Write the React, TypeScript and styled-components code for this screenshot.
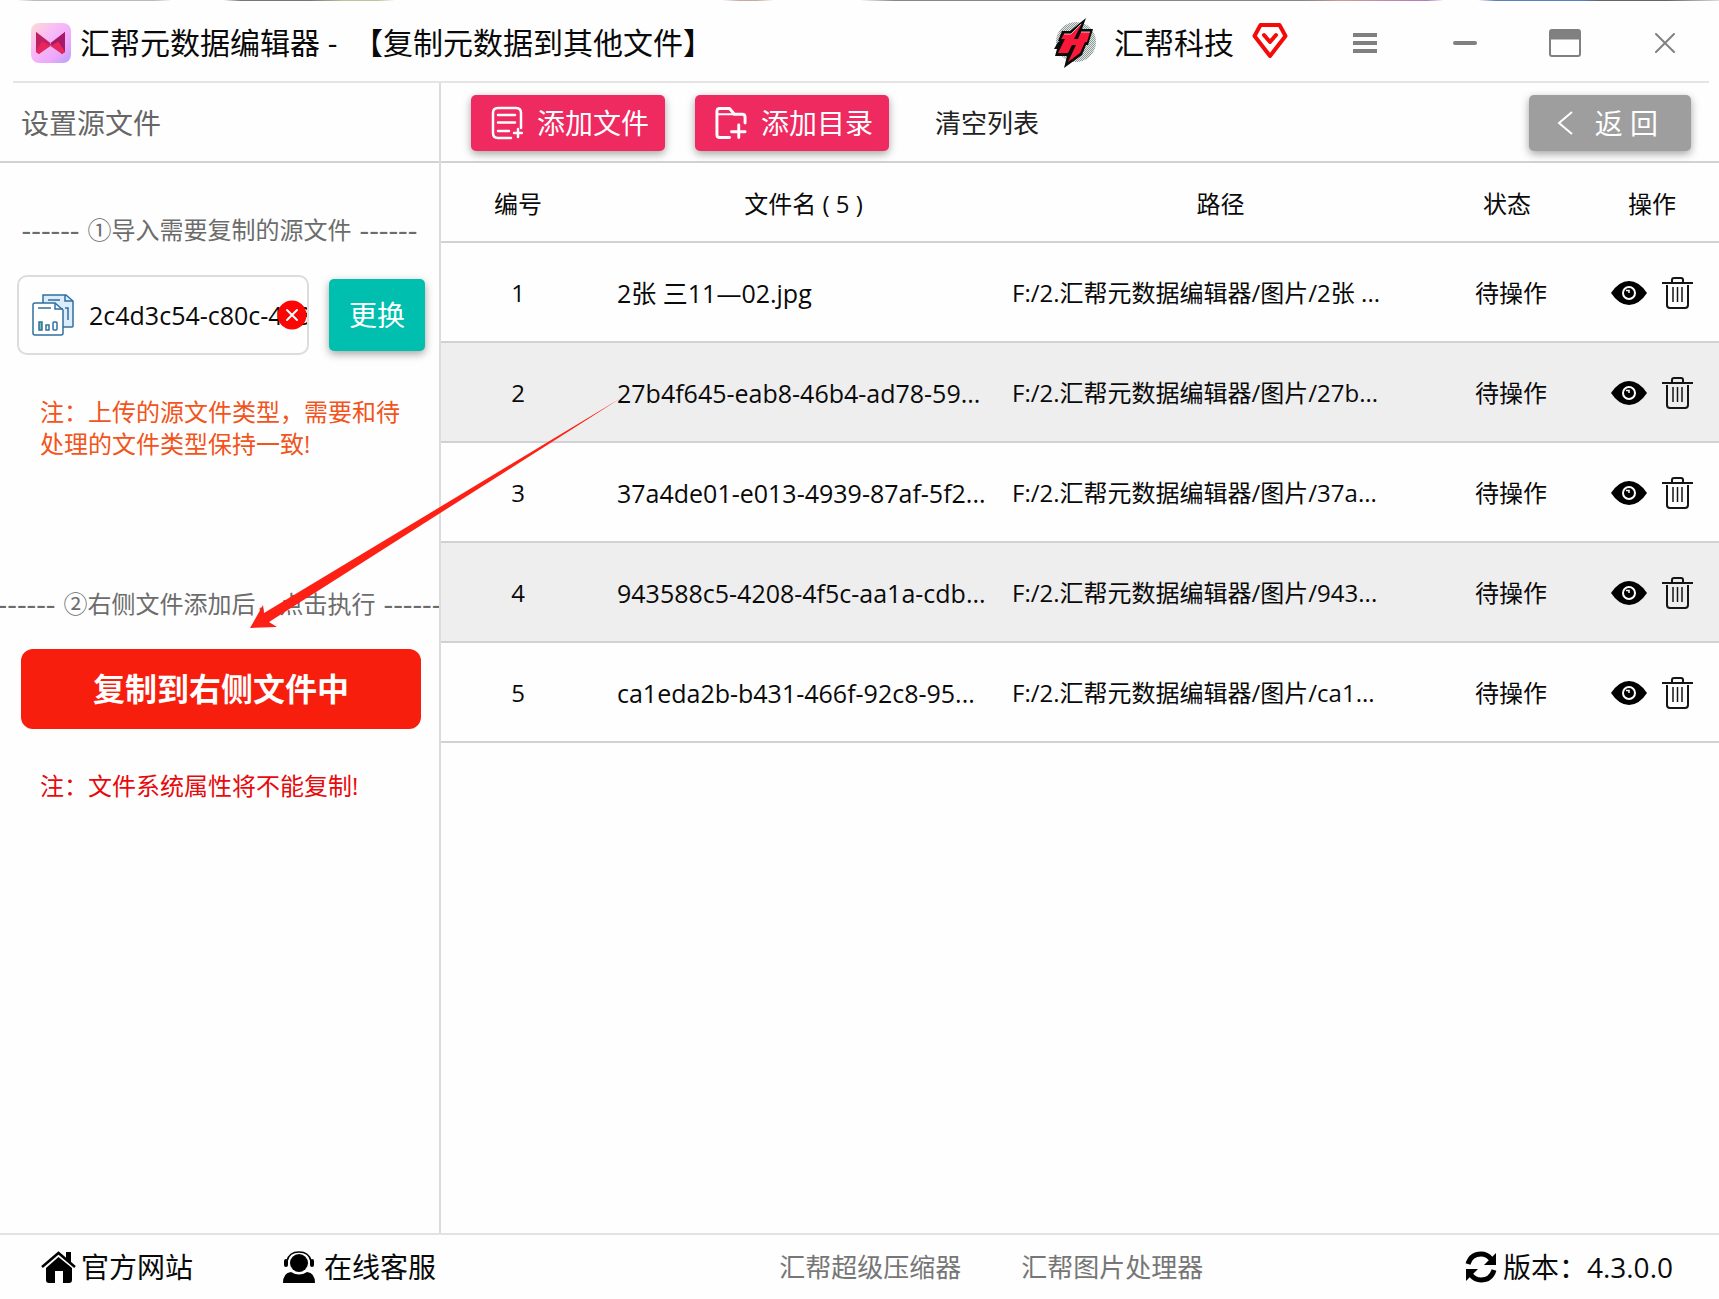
import React, { useState } from 'react';
import styled, { createGlobalStyle } from 'styled-components';

const GlobalStyle = createGlobalStyle`
  * { box-sizing: border-box; }
  body {
    margin: 0;
    background: #fefefe;
    color: #0a0a0a;
    font-family: "Open Sans", "Noto Sans CJK SC", sans-serif;
    font-size: 24px;
    line-height: 32px;
  }
  button { font: inherit; color: inherit; border: 0; padding: 0; background: none; cursor: pointer; }
  a { color: inherit; text-decoration: none; }
  svg { display: block; flex: none; }
`;

const Window = styled.div`
  position: relative;
  display: flex;
  flex-direction: column;
  min-height: 100vh;
  overflow: hidden;
`;

const TopEdge = styled.div`
  height: 1px;
  background: linear-gradient(90deg, #fff 1%, #bbb 2% 9%, #fff 10% 13%, #777 14% 18%, #b9c79c 20% 22%, #fff 23% 42%, #c9a9a0 43% 44%, #fff 45% 50%, #888 52% 76%, #d09a94 78%, #b07cc0 83%, #fff 84% 86%, #5d7fc0 87% 92%, #666 93% 97%, #ddd);
`;

const TitleBar = styled.header`
  display: flex;
  align-items: center;
  height: 82px;
  margin: 0 10px 0 13px;
  padding: 4px 0 0 18px;
  border-bottom: 2px solid #e4e4e4;
  font-size: 30px;
  line-height: 40px;
`;

const AppTitle = styled.h1`
  flex: 1;
  display: flex;
  align-items: center;
  gap: 9px;
  margin: 0;
  font-size: inherit;
  font-weight: 400;
  white-space: pre;
`;

const Brand = styled.div`
  display: flex;
  align-items: center;
  gap: 18px;
  padding-right: 27px;
`;

const WindowButtons = styled.div`
  display: flex;
  margin-right: -6px;
`;

const WindowButton = styled.button`
  display: flex;
  justify-content: center;
  align-items: center;
  width: 100px;
  height: 60px;
  color: #808080;
`;

const Body = styled.div`
  flex: 1;
  display: flex;
`;

const Sidebar = styled.aside`
  flex: none;
  width: 441px;
  border-right: 2px solid #dcdcdc;
  overflow: hidden;
`;

const Bar = styled.div`
  display: flex;
  align-items: center;
  height: 80px;
  padding-top: 2px;
  border-bottom: 2px solid #d2d2d2;
`;

const SidebarTitle = styled.h2`
  margin: 0;
  padding-left: 21px;
  font-size: 28px;
  font-weight: 400;
  color: #666;
`;

const StepTitle = styled.h3<{ $top: number }>`
  display: flex;
  justify-content: center;
  align-items: center;
  gap: 8px;
  margin: ${(p) => p.$top}px 0 0;
  font-size: 24px;
  font-weight: 400;
  color: #6c6c6c;
  white-space: nowrap;
`;

const Dashes = styled.span`
  font-size: 30px;
`;

const SourceRow = styled.div`
  display: flex;
  align-items: center;
  gap: 20px;
  padding: 29px 14px 0 17px;
`;

const FileBox = styled.div`
  position: relative;
  flex: 1;
  display: flex;
  align-items: center;
  gap: 15px;
  min-width: 0;
  height: 80px;
  padding-left: 13px;
  border: 2px solid #dcdcdc;
  border-radius: 10px;
  overflow: hidden;
  white-space: nowrap;
`;

const RemoveButton = styled.button`
  position: absolute;
  right: 0;
  top: 23px;
`;

const RaisedButton = styled.button<{ $bg: string; $height?: number }>`
  display: flex;
  align-items: center;
  justify-content: center;
  gap: 14px;
  height: ${(p) => p.$height ?? 56}px;
  padding: 0 16px 0 20px;
  border-radius: 5px;
  background: ${(p) => p.$bg};
  box-shadow: 0 3px 8px rgba(0, 0, 0, 0.36);
  color: #fff;
  font-size: 28px;
  white-space: nowrap;
`;

const Replace = styled(RaisedButton)`
  width: 96px;
  padding: 0;
`;

const Note = styled.p<{ $color: string }>`
  margin: 41px 36px 0 40px;
  color: ${(p) => p.$color};
`;

const ExecuteButton = styled.button`
  display: block;
  width: calc(100% - 39px);
  height: 80px;
  margin: 29px 18px 0 21px;
  border-radius: 12px;
  background: #f71e0d;
  color: #fff;
  font-size: 32px;
  font-weight: 700;
`;

const Content = styled.main`
  flex: 1;
  min-width: 0;
`;

const Toolbar = styled(Bar)`
  gap: 30px;
  padding: 2px 28px 0 30px;
`;

const ClearButton = styled.button`
  margin: 0 auto 0 16px;
  font-size: 26px;
  color: #222;
`;

const BackButton = styled(RaisedButton)`
  gap: 22px;
  padding: 0 33px 0 28px;
`;

const FileTable = styled.table`
  width: 100%;
  table-layout: fixed;
  border-collapse: separate;
  border-spacing: 0;
`;

const Column = styled.col<{ $width?: number }>`
  width: ${(p) => (p.$width ? `${p.$width}px` : 'auto')};
`;

const HeadCell = styled.th`
  height: 80px;
  padding: 4px 0 0;
  border-bottom: 2px solid #d2d2d2;
  font-weight: 400;
`;

const Row = styled.tr`
  &:nth-child(even) { background: #eee; }
`;

const Cell = styled.td<{ $align?: string; $indent?: number }>`
  height: 100px;
  padding: 2px 0 0 ${(p) => p.$indent ?? 0}px;
  border-bottom: 2px solid #d2d2d2;
  text-align: ${(p) => p.$align ?? 'center'};
  white-space: nowrap;
`;

const FileName = styled.span`
  font-size: 25px;
`;

const Actions = styled.div`
  display: flex;
  justify-content: center;
  gap: 15px;
`;

const IconButton = styled.button`
  display: flex;
  align-items: center;
`;

const Footer = styled.footer`
  display: grid;
  grid-template-columns: 11fr auto 7fr;
  align-items: center;
  height: 66px;
  padding: 0 46px 0 41px;
  border-top: 2px solid #e2e2e2;
  font-size: 28px;
  white-space: nowrap;
`;

const FooterGroup = styled.nav<{ $gap: number }>`
  display: flex;
  gap: ${(p) => p.$gap}px;
`;

const Promo = styled(FooterGroup)`
  font-size: 26px;
  color: #767676;
`;

const FooterLink = styled.a<{ $gap: number }>`
  display: flex;
  align-items: center;
  gap: ${(p) => p.$gap}px;
`;

const Version = styled.div`
  display: flex;
  justify-content: flex-end;
  align-items: center;
  gap: 6px;
`;

const Pointer = styled.svg`
  position: absolute;
  left: 250px;
  top: 396px;
  pointer-events: none;
`;

const AppLogo = () => (
  <svg width="40" height="40" viewBox="0 0 40 40" aria-hidden="true">
    <defs>
      <linearGradient id="logoBg" x1="0" y1="0" x2="1" y2="1">
        <stop offset="0" stopColor="#fbdcd0" />
        <stop offset="0.35" stopColor="#f8bdf6" />
        <stop offset="0.7" stopColor="#efa8fb" />
        <stop offset="1" stopColor="#b5a2fa" />
      </linearGradient>
    </defs>
    <rect width="40" height="40" rx="8" fill="url(#logoBg)" />
    <path d="M5 9L19.500 20L8 31L5 29Z" fill="#d4276a" />
    <path d="M34 9L19.500 20L31 31L34 29Z" fill="#ad1a68" />
    <path d="M8 31L19.500 23L31 31L34 29L27 18L19.500 23L12 18L5 29Z" fill="#e8265d" />
    <path d="M5 9L19.500 21L19.500 23L11 18L5 27Z" fill="#c01f60" />
    <path d="M34 9L19.500 21L19.500 23L28 18L34 27Z" fill="#a5186a" />
  </svg>
);

const BrandLogo = () => (
  <svg width="42" height="50" viewBox="0 0 42 50" aria-hidden="true">
    <defs>
      <pattern id="dots" width="2" height="2" patternUnits="userSpaceOnUse">
        <rect width="2" height="2" fill="#e2e8e5" />
        <rect width="1" height="1" fill="#8d9a95" />
        <rect x="1" y="1" width="1" height="1" fill="#8d9a95" />
      </pattern>
    </defs>
    <circle cx="22" cy="24" r="20" fill="url(#dots)" />
    <path d="M32 0L28 11H39L34 27H32L28 37L10 50L13 38H1L3 31H0L4 24H6L4 23L8 13H16Z" fill="#0b0b0b" />
    <path d="M28 5L17 16H10L7 21H11L4 35H14L18 27H22L14 44L26 35L31 24H33L36 14H27L24 21H20Z" fill="#f9173a" />
    <path d="M27 6L17 16H10M36 14H27" stroke="#fff" strokeWidth="1" strokeOpacity="0.7" fill="none" />
  </svg>
);

const DiamondIcon = () => (
  <svg width="36" height="40" viewBox="0 0 36 40" fill="none" stroke="#f50a0a" strokeWidth="4" aria-hidden="true">
    <path d="M8.500 2H27.500L33.500 13L18 33L2.500 13Z" strokeLinejoin="round" />
    <path d="M12 12L18 19L24 12" strokeLinecap="round" strokeLinejoin="round" />
  </svg>
);

const AddFileIcon = () => (
  <svg width="32" height="34" viewBox="0 0 32 34" fill="none" stroke="#fff" strokeWidth="2.500" strokeLinecap="round" aria-hidden="true">
    <path d="M30 22V7Q30 2 25 2H7Q2 2 2 7V27Q2 32 7 32H20" />
    <path d="M7 9H24M7 16.500H24M7 25H18M23 27H31M27 23V31" />
  </svg>
);

const AddFolderIcon = () => (
  <svg width="32" height="34" viewBox="0 0 33 34" fill="none" stroke="#fff" strokeWidth="3" strokeLinecap="round" strokeLinejoin="round" aria-hidden="true">
    <path d="M15 32H5Q2 32 2 29V5Q2 2 5 2H15L20 8H28Q31 8 31 11V17" />
    <path d="M17 26H31M24.500 19V32" />
    <path d="M3 8H20" strokeWidth="2" />
  </svg>
);

const DocumentsIcon = () => (
  <svg width="42" height="42" viewBox="0 0 42 42" fill="#fff" stroke="#2f6f9f" strokeWidth="1.500" aria-hidden="true">
    <path d="M11 1H34L41 7V32Q41 33 40 33H12Q11 33 11 32Z" fill="#dcecfb" />
    <path d="M33 1V7H41M16 6H28M33 14H36V26" fill="none" />
    <path d="M3 9H23L31 16V39Q31 41 29 41H3Q1 41 1 39V11Q1 9 3 9Z" />
    <path d="M23 9V15H31M6 14H19" fill="none" />
    <rect x="7" y="28" width="3" height="8" fill="#7ac3a5" />
    <rect x="14" y="31" width="3" height="5" />
    <rect x="21" y="28" width="4" height="8" rx="1" />
  </svg>
);

const RemoveIcon = () => (
  <svg width="30" height="30" viewBox="0 0 30 30" aria-hidden="true">
    <circle cx="15" cy="15" r="14.500" fill="#fb0505" />
    <path d="M10 10L20 20M20 10L10 20" stroke="#fff" strokeWidth="2" strokeLinecap="round" />
  </svg>
);

const EyeIcon = () => (
  <svg width="36" height="24" viewBox="0 0 36 24" aria-hidden="true">
    <path d="M0 12Q8 0 18 0T36 12Q28 24 18 24T0 12Z" fill="#000" />
    <circle cx="18" cy="12" r="6" fill="none" stroke="#fff" strokeWidth="2" />
    <path d="M15 9.500H18V12" fill="none" stroke="#fff" strokeWidth="1.500" />
  </svg>
);

const TrashIcon = () => (
  <svg width="31" height="32" viewBox="0 0 31 32" fill="none" stroke="#151515" strokeWidth="2" aria-hidden="true">
    <path d="M0 6H31" />
    <path d="M10 6V3Q10 1 12 1H19Q21 1 21 3V6" />
    <path d="M5 8V28Q5 31 8 31H23Q26 31 26 28V8" />
    <path d="M11 10V25M15.500 10V25M20 10V25" strokeWidth="1.500" />
  </svg>
);

const HomeIcon = () => (
  <svg width="35" height="32" viewBox="0 0 35 32" aria-hidden="true">
    <path d="M17.500 6L31 17V29Q31 32 28 32H22V20H14V32H8Q5 32 5 29V17Z" />
    <path d="M1 16L17.500 2L34 16" fill="none" stroke="#000" strokeWidth="2.500" />
    <path d="M25 1H30V12L25 8Z" />
  </svg>
);

const AgentIcon = () => (
  <svg width="32" height="32" viewBox="0 0 32 32" aria-hidden="true">
    <circle cx="16" cy="12" r="9" />
    <path d="M4 10Q6 1 16 1T28 10" fill="none" stroke="#000" strokeWidth="1.500" />
    <rect x="1" y="8" width="4" height="8" rx="2" />
    <rect x="27" y="8" width="4" height="8" rx="2" />
    <path d="M0 32Q0 22 8 21Q16 26 24 21Q32 22 32 32Z" />
  </svg>
);

const RefreshIcon = () => (
  <svg width="32" height="32" viewBox="0 0 32 32" aria-hidden="true">
    <path d="M3 13Q6 3 16 3Q22 3 26 8" fill="none" stroke="#000" strokeWidth="5" />
    <path d="M31 2V14H19Z" />
    <path d="M29 19Q26 29 16 29Q10 29 6 24" fill="none" stroke="#000" strokeWidth="5" />
    <path d="M1 30V18H13Z" />
  </svg>
);

const initialFiles = [
  { id: 1, name: '2张 三11—02.jpg', path: 'F:/2.汇帮元数据编辑器/图片/2张 ...' },
  { id: 2, name: '27b4f645-eab8-46b4-ad78-59...', path: 'F:/2.汇帮元数据编辑器/图片/27b...' },
  { id: 3, name: '37a4de01-e013-4939-87af-5f2...', path: 'F:/2.汇帮元数据编辑器/图片/37a...' },
  { id: 4, name: '943588c5-4208-4f5c-aa1a-cdb...', path: 'F:/2.汇帮元数据编辑器/图片/943...' },
  { id: 5, name: 'ca1eda2b-b431-466f-92c8-95...', path: 'F:/2.汇帮元数据编辑器/图片/ca1...' },
];

export default function App() {
  const [files, setFiles] = useState(initialFiles);

  return (
    <>
      <GlobalStyle />
      <Window>
        <TopEdge />
        <TitleBar>
          <AppTitle>
            <AppLogo />
            <span>{'汇帮元数据编辑器 -  【复制元数据到其他文件】'}</span>
          </AppTitle>
          <Brand>
            <BrandLogo />
            <span>汇帮科技</span>
            <DiamondIcon />
          </Brand>
          <WindowButtons>
            <WindowButton aria-label="菜单">
              <svg width="24" height="20" viewBox="0 0 24 20" fill="currentColor">
                <path d="M0 0H24V4H0ZM0 8H24V12H0ZM0 16H24V20H0Z" />
              </svg>
            </WindowButton>
            <WindowButton aria-label="最小化">
              <svg width="24" height="4" viewBox="0 0 24 4" fill="currentColor">
                <rect width="24" height="4" rx="2" />
              </svg>
            </WindowButton>
            <WindowButton aria-label="最大化">
              <svg width="32" height="28" viewBox="0 0 32 28" fill="none" stroke="currentColor" strokeWidth="2">
                <rect x="1" y="1" width="30" height="26" rx="2" />
                <path d="M1 6H31" strokeWidth="9" />
              </svg>
            </WindowButton>
            <WindowButton aria-label="关闭">
              <svg width="20" height="20" viewBox="0 0 20 20" stroke="currentColor" strokeWidth="2" strokeLinecap="round">
                <path d="M1 1L19 19M19 1L1 19" />
              </svg>
            </WindowButton>
          </WindowButtons>
        </TitleBar>

        <Body>
          <Sidebar>
            <Bar>
              <SidebarTitle>设置源文件</SidebarTitle>
            </Bar>
            <StepTitle $top={51}>
              <Dashes>------</Dashes>①导入需要复制的源文件<Dashes>------</Dashes>
            </StepTitle>
            <SourceRow>
              <FileBox>
                <DocumentsIcon />
                <FileName>2c4d3c54-c80c-453</FileName>
                <RemoveButton aria-label="移除">
                  <RemoveIcon />
                </RemoveButton>
              </FileBox>
              <Replace $bg="#00bfae" $height={72}>更换</Replace>
            </SourceRow>
            <Note $color="#f2541b">注：上传的源文件类型，需要和待处理的文件类型保持一致!</Note>
            <StepTitle $top={128}>
              <Dashes>------</Dashes>②右侧文件添加后，点击执行<Dashes>------</Dashes>
            </StepTitle>
            <ExecuteButton>复制到右侧文件中</ExecuteButton>
            <Note $color="#e8090c">注：文件系统属性将不能复制!</Note>
          </Sidebar>

          <Content>
            <Toolbar>
              <RaisedButton $bg="#ee2a60">
                <AddFileIcon />
                添加文件
              </RaisedButton>
              <RaisedButton $bg="#ee2a60">
                <AddFolderIcon />
                添加目录
              </RaisedButton>
              <ClearButton onClick={() => setFiles([])}>清空列表</ClearButton>
              <BackButton $bg="#9e9e9e">
                <svg width="16" height="24" viewBox="0 0 16 24" fill="none" stroke="#fff" strokeWidth="2" aria-hidden="true">
                  <path d="M15 1L2 12L15 23" />
                </svg>
                返 回
              </BackButton>
            </Toolbar>
            <FileTable>
              <colgroup>
                <Column $width={154} />
                <Column />
                <Column />
                <Column $width={156} />
                <Column $width={134} />
              </colgroup>
              <thead>
                <tr>
                  <HeadCell>编号</HeadCell>
                  <HeadCell>文件名 ( {files.length} )</HeadCell>
                  <HeadCell>路径</HeadCell>
                  <HeadCell>状态</HeadCell>
                  <HeadCell>操作</HeadCell>
                </tr>
              </thead>
              <tbody>
                {files.map((file) => (
                  <Row key={file.id}>
                    <Cell>{file.id}</Cell>
                    <Cell $align="left" $indent={22}>
                      <FileName>{file.name}</FileName>
                    </Cell>
                    <Cell $align="left">{file.path}</Cell>
                    <Cell $indent={8}>待操作</Cell>
                    <Cell>
                      <Actions>
                        <IconButton aria-label="查看">
                          <EyeIcon />
                        </IconButton>
                        <IconButton
                          aria-label="删除"
                          onClick={() => setFiles(files.filter((f) => f.id !== file.id))}
                        >
                          <TrashIcon />
                        </IconButton>
                      </Actions>
                    </Cell>
                  </Row>
                ))}
              </tbody>
            </FileTable>
          </Content>
        </Body>

        <Footer>
          <FooterGroup $gap={90}>
            <FooterLink href="#site" $gap={5}>
              <HomeIcon />
              官方网站
            </FooterLink>
            <FooterLink href="#service" $gap={9}>
              <AgentIcon />
              在线客服
            </FooterLink>
          </FooterGroup>
          <Promo $gap={60}>
            <a href="#compress">汇帮超级压缩器</a>
            <a href="#image">汇帮图片处理器</a>
          </Promo>
          <Version>
            <RefreshIcon />
            <span>版本：4.3.0.0</span>
          </Version>
        </Footer>

        <Pointer width="372" height="234" viewBox="0 0 372 234" aria-hidden="true">
          <path d="M0 232L13 209L14 217L371 2L19 226L27 231Z" fill="#fd2115" />
        </Pointer>
      </Window>
    </>
  );
}
